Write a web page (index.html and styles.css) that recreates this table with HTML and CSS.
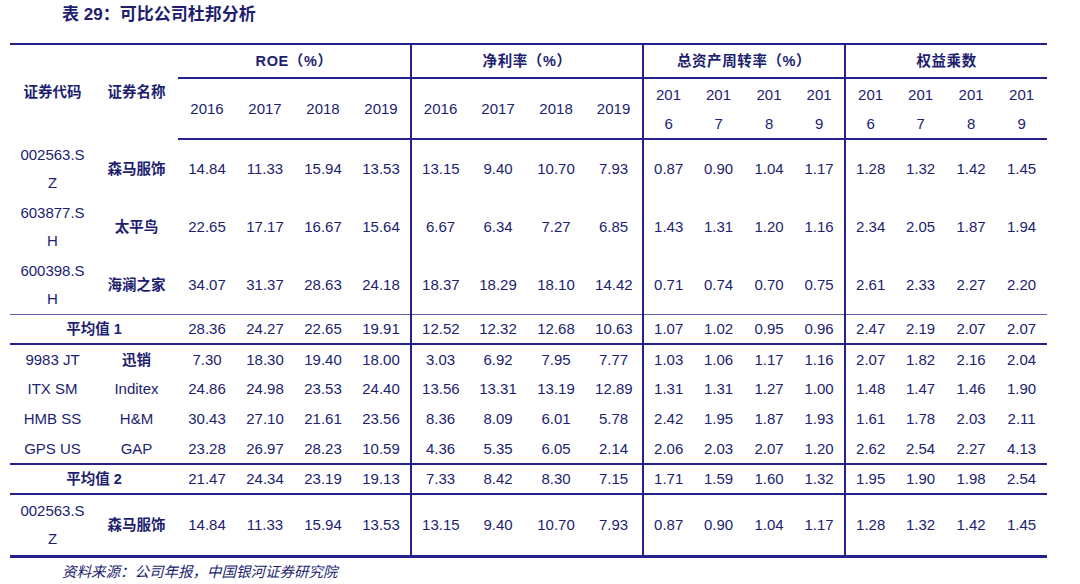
FILE: index.html
```html
<!DOCTYPE html>
<html lang="zh">
<head>
<meta charset="utf-8">
<link rel="stylesheet" href="styles.css">
</head>
<body>
<div class="page">
  <h1 class="title">表 29：可比公司杜邦分析</h1>
  <table class="dupont">
    <colgroup>
      <col class="c-code"><col class="c-name">
      <col class="c58"><col class="c58"><col class="c58"><col class="c59">
      <col class="c58"><col class="c58"><col class="c58"><col class="c58">
      <col class="c50"><col class="c51"><col class="c50"><col class="c51">
      <col class="c50"><col class="c51"><col class="c50"><col class="c51">
    </colgroup>
    <thead>
      <tr class="h1">
        <th rowspan="2" class="cjk">证券代码</th>
        <th rowspan="2" class="cjk">证券名称</th>
        <th colspan="4" class="grp">ROE（%）</th>
        <th colspan="4" class="grp gs">净利率（%）</th>
        <th colspan="4" class="grp gs">总资产周转率（%）</th>
        <th colspan="4" class="grp gs">权益乘数</th>
      </tr>
      <tr class="h2">
        <th>2016</th><th>2017</th><th>2018</th><th>2019</th>
        <th class="gs">2016</th><th>2017</th><th>2018</th><th>2019</th>
        <th class="gs n">2016</th><th class="n">2017</th><th class="n">2018</th><th class="n">2019</th>
        <th class="gs n">2016</th><th class="n">2017</th><th class="n">2018</th><th class="n">2019</th>
      </tr>
    </thead>
    <tbody>
      <tr class="tall">
        <td class="code">002563.SZ</td><td class="cjk">森马服饰</td>
        <td>14.84</td><td>11.33</td><td>15.94</td><td>13.53</td>
        <td class="gs">13.15</td><td>9.40</td><td>10.70</td><td>7.93</td>
        <td class="gs">0.87</td><td>0.90</td><td>1.04</td><td>1.17</td>
        <td class="gs">1.28</td><td>1.32</td><td>1.42</td><td>1.45</td>
      </tr>
      <tr class="tall">
        <td class="code">603877.SH</td><td class="cjk">太平鸟</td>
        <td>22.65</td><td>17.17</td><td>16.67</td><td>15.64</td>
        <td class="gs">6.67</td><td>6.34</td><td>7.27</td><td>6.85</td>
        <td class="gs">1.43</td><td>1.31</td><td>1.20</td><td>1.16</td>
        <td class="gs">2.34</td><td>2.05</td><td>1.87</td><td>1.94</td>
      </tr>
      <tr class="tall thin-bottom">
        <td class="code">600398.SH</td><td class="cjk">海澜之家</td>
        <td>34.07</td><td>31.37</td><td>28.63</td><td>24.18</td>
        <td class="gs">18.37</td><td>18.29</td><td>18.10</td><td>14.42</td>
        <td class="gs">0.71</td><td>0.74</td><td>0.70</td><td>0.75</td>
        <td class="gs">2.61</td><td>2.33</td><td>2.27</td><td>2.20</td>
      </tr>
      <tr class="avg thick-bottom">
        <td colspan="2" class="cjk">平均值 1</td>
        <td>28.36</td><td>24.27</td><td>22.65</td><td>19.91</td>
        <td class="gs">12.52</td><td>12.32</td><td>12.68</td><td>10.63</td>
        <td class="gs">1.07</td><td>1.02</td><td>0.95</td><td>0.96</td>
        <td class="gs">2.47</td><td>2.19</td><td>2.07</td><td>2.07</td>
      </tr>
      <tr class="short">
        <td>9983 JT</td><td class="cjk">迅销</td>
        <td>7.30</td><td>18.30</td><td>19.40</td><td>18.00</td>
        <td class="gs">3.03</td><td>6.92</td><td>7.95</td><td>7.77</td>
        <td class="gs">1.03</td><td>1.06</td><td>1.17</td><td>1.16</td>
        <td class="gs">2.07</td><td>1.82</td><td>2.16</td><td>2.04</td>
      </tr>
      <tr class="short">
        <td>ITX SM</td><td>Inditex</td>
        <td>24.86</td><td>24.98</td><td>23.53</td><td>24.40</td>
        <td class="gs">13.56</td><td>13.31</td><td>13.19</td><td>12.89</td>
        <td class="gs">1.31</td><td>1.31</td><td>1.27</td><td>1.00</td>
        <td class="gs">1.48</td><td>1.47</td><td>1.46</td><td>1.90</td>
      </tr>
      <tr class="short">
        <td>HMB SS</td><td>H&amp;M</td>
        <td>30.43</td><td>27.10</td><td>21.61</td><td>23.56</td>
        <td class="gs">8.36</td><td>8.09</td><td>6.01</td><td>5.78</td>
        <td class="gs">2.42</td><td>1.95</td><td>1.87</td><td>1.93</td>
        <td class="gs">1.61</td><td>1.78</td><td>2.03</td><td>2.11</td>
      </tr>
      <tr class="short thick-bottom">
        <td>GPS US</td><td>GAP</td>
        <td>23.28</td><td>26.97</td><td>28.23</td><td>10.59</td>
        <td class="gs">4.36</td><td>5.35</td><td>6.05</td><td>2.14</td>
        <td class="gs">2.06</td><td>2.03</td><td>2.07</td><td>1.20</td>
        <td class="gs">2.62</td><td>2.54</td><td>2.27</td><td>4.13</td>
      </tr>
      <tr class="avg thick-bottom">
        <td colspan="2" class="cjk">平均值 2</td>
        <td>21.47</td><td>24.34</td><td>23.19</td><td>19.13</td>
        <td class="gs">7.33</td><td>8.42</td><td>8.30</td><td>7.15</td>
        <td class="gs">1.71</td><td>1.59</td><td>1.60</td><td>1.32</td>
        <td class="gs">1.95</td><td>1.90</td><td>1.98</td><td>2.54</td>
      </tr>
      <tr class="tall last">
        <td class="code">002563.SZ</td><td class="cjk">森马服饰</td>
        <td>14.84</td><td>11.33</td><td>15.94</td><td>13.53</td>
        <td class="gs">13.15</td><td>9.40</td><td>10.70</td><td>7.93</td>
        <td class="gs">0.87</td><td>0.90</td><td>1.04</td><td>1.17</td>
        <td class="gs">1.28</td><td>1.32</td><td>1.42</td><td>1.45</td>
      </tr>
    </tbody>
  </table>
  <p class="source">资料来源：公司年报，中国银河证券研究院</p>
</div>
</body>
</html>
```

FILE: styles.css
```css
html, body {
  margin: 0;
  padding: 0;
  background: #ffffff;
}

.page {
  padding: 0 0 0 10px;
  color: #211e6f;
  font-family: "Liberation Sans", Arial, "Noto Sans CJK SC", sans-serif;
  font-size: 15px;
}

.title {
  margin: 0;
  padding: 5px 0 0 52px;
  height: 31px;
  box-sizing: border-box;
  font-size: 17px;
  line-height: 20px;
  font-weight: 700;
  font-family: "Liberation Sans", "Noto Sans CJK SC", sans-serif;
  color: #211e6f;
}

.dupont {
  border-collapse: collapse;
  table-layout: fixed;
  width: 1037px;
  margin-top: 12px;
  border-top: 2px solid #24228a;
  border-bottom: 3px solid #24228a;
}

.c-code { width: 85px; }
.c-name { width: 83px; }
.c58 { width: 58px; }
.c59 { width: 59px; }
.c50 { width: 50px; }
.c51 { width: 51px; }

.dupont th,
.dupont td {
  padding: 0 10px;
  text-align: center;
  vertical-align: middle;
  line-height: 28px;
  font-weight: 400;
  white-space: nowrap;
}

.dupont th.cjk,
.dupont td.cjk,
.dupont .grp {
  font-weight: 700;
  font-family: "Liberation Sans", "Noto Sans CJK SC", sans-serif;
  font-size: 14.5px;
}

.dupont .grp {
  letter-spacing: 0.6px;
}

.dupont td.code {
  white-space: normal;
  word-break: break-all;
  padding: 0 8px;
}

.dupont th.n {
  white-space: normal;
  word-break: break-all;
  padding: 0 9px;
  line-height: 29px;
}

.dupont td:first-child,
.dupont th:first-child {
  padding: 0 6px;
}

.dupont td.code:first-child {
  padding: 0 8px;
}

.gs {
  border-left: 2px solid #24228a;
}

.h1 th {
  height: 32px;
}

.h1 .grp {
  border-bottom: 2px solid #24228a;
}

.h2 th {
  height: 59px;
  border-bottom: 2px solid #24228a;
}

.tall td {
  height: 58px;
}

.short td {
  height: 29.6px;
  line-height: 22px;
}

.avg td {
  height: 28px;
  line-height: 22px;
}

.thin-bottom td {
  border-bottom: 1px solid #6462b0;
}

.thick-bottom td {
  border-bottom: 2px solid #24228a;
}

.last td {
  height: 60px;
}

.source {
  margin: 4px 0 0 52px;
  font-size: 14.5px;
  font-style: italic;
  font-family: "Liberation Sans", "Noto Sans CJK SC", sans-serif;
  color: #211e6f;
  line-height: 20px;
}
```
